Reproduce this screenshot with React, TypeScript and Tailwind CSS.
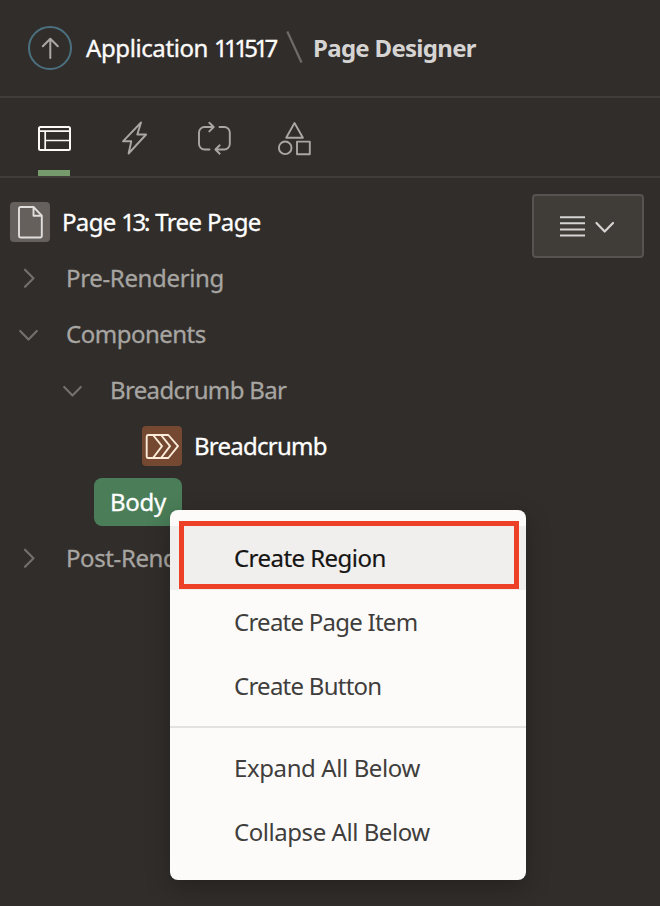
import type { ReactNode } from 'react';

function Chevron({ open }: { open?: boolean }) {
  return (
    <svg width="24" height="24" viewBox="0 0 24 24" fill="none" stroke="#72706d" strokeWidth="2.2" strokeLinecap="round" strokeLinejoin="round" className="shrink-0">
      {open ? <path d="M4.200 9l8.300 8.500L20.800 9" /> : <path d="M9 3.700l8.500 8.500L9 20.700" />}
    </svg>
  );
}

function Row({ children, className }: { children: ReactNode; className: string }) {
  return <div className={`flex h-14 items-center whitespace-nowrap ${className}`}>{children}</div>;
}

function MenuItem({ children, className }: { children: ReactNode; className: string }) {
  return <div className={`flex h-16 items-center pl-16 whitespace-nowrap ${className}`}>{children}</div>;
}

function Toolbar() {
  return (
    <nav className="flex h-20 shrink-0 items-center border-b-2 border-[#413d39] pl-[38px] text-[#a9a7a4]">
      <div className="flex h-full w-8 flex-col justify-between text-[#fcfbfa]">
        <svg width="34" height="34" viewBox="0 0 34 34" fill="none" stroke="currentColor" strokeWidth="2" className="mt-6 shrink-0">
          <rect x="1" y="5" width="31" height="23" rx="1.5" />
          <path d="M1 9.2h31M7.2 9.2V28M7.2 18.5h25" strokeWidth="1.7" />
        </svg>
        <div className="h-1.5 w-8 bg-[#759a6c]" />
      </div>
      <svg width="34" height="34" viewBox="0 0 34 34" fill="none" stroke="currentColor" strokeWidth="1.9" strokeLinejoin="round" className="ml-12 mt-0.5">
        <path d="M23 1.5L5 20.300h8.300l-2.700 12.200 17.500-19h-8.800z" />
      </svg>
      <svg width="36" height="36" viewBox="0 0 36 36" fill="none" stroke="currentColor" strokeWidth="1.9" strokeLinecap="round" strokeLinejoin="round" className="ml-[45px] mt-0.5">
        <path d="M12.500 29.500H7.500a5.500 5.500 0 0 1-5.500-5.500V12.500A5.500 5.500 0 0 1 7.500 7H16.500M12.300 2.700L16.700 7l-4.400 4.400M22.500 7h4.800a5.500 5.500 0 0 1 5.500 5.500v11.500a5.500 5.500 0 0 1-5.500 5.500H18.700M22.700 25.300l-4.300 4.200 4.300 4.200" />
      </svg>
      <svg width="36" height="36" viewBox="0 0 36 36" fill="none" stroke="currentColor" strokeWidth="1.9" strokeLinejoin="round" className="ml-[44px] mt-0.5">
        <path d="M17.500 3L9.200 17.700h16.700z" />
        <circle cx="8.200" cy="27.800" r="6.300" />
        <rect x="20" y="21.600" width="12.800" height="12.600" />
      </svg>
    </nav>
  );
}

export default function App() {
  return (
    <div className="relative flex h-[906px] w-[660px] flex-col overflow-hidden bg-[#312d2a] font-['Noto_Sans',sans-serif] text-[24px] leading-8 text-[#a7a5a2]">
      <header className="flex h-[98px] shrink-0 items-center border-b-2 border-[#413d39] pl-7 whitespace-nowrap">
        <div className="flex size-11 shrink-0 items-center justify-center rounded-full border-2 border-[#4b7180]">
          <svg width="24" height="24" viewBox="0 0 24 24" fill="none" stroke="#aaa8a5" strokeWidth="2" strokeLinecap="round" strokeLinejoin="round">
            <path d="M12.300 22V3M4.800 10.300l7.500-7.500 7.500 7.500" />
          </svg>
        </div>
        <span className="ml-3.5 w-[190px] tracking-[-0.4px] text-[#fcfbfa] [-webkit-text-stroke:0.35px]">
          Application <span className="tracking-[-3.6px]">111517</span>
        </span>
        <svg width="20" height="36" viewBox="0 0 20 36" fill="none" stroke="#6f6c68" strokeWidth="2.200" className="ml-2 shrink-0">
          <path d="M3.300 1.500L17.500 32.500" />
        </svg>
        <h1 className="ml-[9px] font-bold tracking-[-0.7px] text-[#d5d4d2]">Page Designer</h1>
      </header>
      <Toolbar />
      <main className="flex flex-1 justify-between pt-4 pr-4">
        <div className="flex flex-1 flex-col [-webkit-text-stroke:0.3px]">
          <Row className="pl-2.5 text-white">
            <div className="flex size-10 shrink-0 items-center justify-center rounded bg-[#65605c]">
              <svg width="28" height="36" viewBox="0 0 28 36" fill="none" stroke="#e0dfde" strokeWidth="1.900" strokeLinejoin="round">
                <path d="M4.500 3h13l8.300 8.700V32a1.500 1.500 0 0 1-1.500 1.500H4.500A1.500 1.500 0 0 1 3 32V4.500A1.500 1.500 0 0 1 4.500 3zM17.500 3v8.700H25.800" />
              </svg>
            </div>
            <span className="ml-3 tracking-[-0.65px]">Page <span className="tracking-[-2.4px]">13</span>: Tree Page</span>
          </Row>
          <Row className="gap-[26px] pl-4"><Chevron /><span className="tracking-[-0.35px]">Pre-Rendering</span></Row>
          <Row className="gap-[26px] pl-4"><Chevron open /><span className="tracking-[-0.5px]">Components</span></Row>
          <Row className="gap-[26px] pl-[60px]"><Chevron open /><span className="tracking-[-0.65px]">Breadcrumb Bar</span></Row>
          <Row className="gap-3 pl-[142px] text-white">
            <div className="flex size-10 shrink-0 items-center justify-center rounded bg-[#754831]">
              <svg width="36" height="28" viewBox="0 0 36 28" fill="none" stroke="#fbecd9" strokeWidth="1.900" strokeLinejoin="round">
                <path d="M4 3H24.300L34 14.200 24.300 26H4A1.500 1.500 0 0 1 2.700 24.500V4.500A1.500 1.500 0 0 1 4 3zM9 3L18 14.200 9 26M17 3L26 14.200 17 26" />
              </svg>
            </div>
            <span className="tracking-[-0.75px]">Breadcrumb</span>
          </Row>
          <Row className="pl-[94px]">
            <div className="flex h-12 w-[88px] items-center rounded-lg bg-[#4a7d58] pl-4 tracking-[-0.3px] text-white">Body</div>
          </Row>
          <Row className="gap-[26px] pl-4"><Chevron /><span className="tracking-[-0.4px]">Post-Rendering</span></Row>
        </div>
        <button className="flex h-16 w-28 items-center justify-center gap-2 rounded border-2 border-[#565350] bg-[#403c38]">
          <svg width="28" height="28" viewBox="0 0 28 28" stroke="#d5d4d2" strokeWidth="2">
            <path d="M2 5.200h25M2 11.300h25M2 17.500h25M2 23.600h25" />
          </svg>
          <svg width="24" height="24" viewBox="0 0 24 24" fill="none" stroke="#d5d4d2" strokeWidth="2.200" strokeLinecap="round" strokeLinejoin="round">
            <path d="M2.500 9l8.200 8.500L19 9" />
          </svg>
        </button>
      </main>
      <div className="absolute top-[510px] left-[170px] h-[370px] w-[356px] rounded-lg bg-[#fcfbfa] py-4 text-[#403e3c] shadow-[0_8px_24px_rgba(0,0,0,0.25)]">
        <MenuItem className="bg-[#f0efee] tracking-[-0.55px] text-[#161513] [-webkit-text-stroke:0.2px]">Create Region</MenuItem>
        <MenuItem className="tracking-[-0.75px]">Create Page Item</MenuItem>
        <MenuItem className="tracking-[-0.75px]">Create Button</MenuItem>
        <div className="my-2 h-0.5 bg-[#e3e2e1]" />
        <MenuItem className="tracking-[-0.4px]">Expand All Below</MenuItem>
        <MenuItem className="tracking-[-0.45px]">Collapse All Below</MenuItem>
        <div className="absolute top-[11px] left-[9px] h-[68px] w-[340px] border-5 border-[#ec4126]" />
      </div>
    </div>
  );
}
